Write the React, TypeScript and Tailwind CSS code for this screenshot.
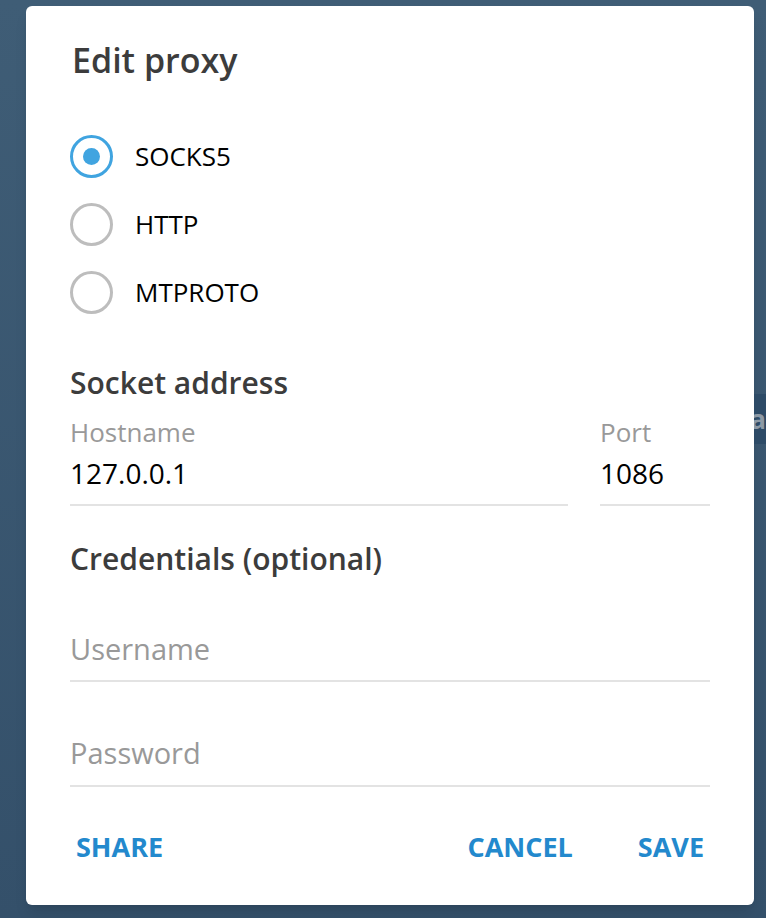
const Radio = ({ label, checked }: { label: string; checked?: boolean }) => (
  <div className="flex h-[68px] items-center">
    <div
      className={
        checked
          ? "flex h-[43px] w-[43px] items-center justify-center rounded-full border-[3px] border-[#40a4e0]"
          : "h-[43px] w-[43px] rounded-full border-[3px] border-[#bdbdbd]"
      }
    >
      {checked && <div className="h-[17px] w-[17px] rounded-full bg-[#40a4e0]" />}
    </div>
    <span className="ml-[22px] text-[26px] leading-[32px] text-black">{label}</span>
  </div>
);

const App = () => {
  return (
    <div
      className="flex h-[918px] w-[766px] overflow-hidden bg-gradient-to-b from-[#3f5d76] to-[#34506a]"
      style={{ fontFamily: '"Open Sans", "Noto Sans", sans-serif' }}
    >
      <div className="w-[26px] shrink-0" />

      {/* Dialog */}
      <div className="mt-[6px] flex h-[899px] w-[728px] shrink-0 flex-col rounded-md bg-white pl-[44px] pr-[44px] pt-[34px] shadow-lg">
        <h1 className="ml-[2px] text-[34px] font-semibold leading-[40px] text-[#3c3c3c]">Edit proxy</h1>

        <div className="mt-[42px] flex flex-col">
          <Radio label="SOCKS5" checked />
          <Radio label="HTTP" />
          <Radio label="MTPROTO" />
        </div>

        <h2 className="mt-[39px] text-[30px] font-semibold leading-[36px] text-[#3c3c3c]">Socket address</h2>

        <div className="mt-[15px] flex gap-[32px]">
          <div className="flex-1 border-b-2 border-[#e3e3e3] pb-[13px]">
            <div className="text-[26px] leading-[32px] text-[#999999]">Hostname</div>
            <div className="mt-[7px] text-[28px] leading-[36px] text-black">127.0.0.1</div>
          </div>
          <div className="w-[110px] border-b-2 border-[#e3e3e3] pb-[13px]">
            <div className="text-[26px] leading-[32px] text-[#999999]">Port</div>
            <div className="mt-[7px] text-[28px] leading-[36px] text-black">1086</div>
          </div>
        </div>

        <h2 className="mt-[35px] text-[30px] font-semibold leading-[36px] text-[#3c3c3c]">Credentials (optional)</h2>

        <div className="mt-[54px] border-b-2 border-[#e3e3e3] pb-[13px] text-[29px] leading-[36px] text-[#999999]">
          Username
        </div>
        <div className="mt-[53px] border-b-2 border-[#e3e3e3] pb-[14px] text-[29px] leading-[36px] text-[#999999]">
          Password
        </div>

        <div className="mt-[44px] flex items-center text-[27px] font-bold leading-[32px] text-[#2389cd]">
          <span className="ml-[6px]">SHARE</span>
          <span className="ml-auto">CANCEL</span>
          <span className="ml-[65px] mr-[6px]">SAVE</span>
        </div>
      </div>

      {/* Background peeking out on the right */}
      <div className="flex w-[12px] shrink-0 flex-col">
        <div className="h-[394px]" />
        <div className="flex h-[50px] items-center justify-end overflow-hidden bg-[#2d4b67]">
          <span className="whitespace-nowrap text-[26px] font-bold text-[#8d9aa6]">ta</span>
        </div>
      </div>
    </div>
  );
};

export default App;
